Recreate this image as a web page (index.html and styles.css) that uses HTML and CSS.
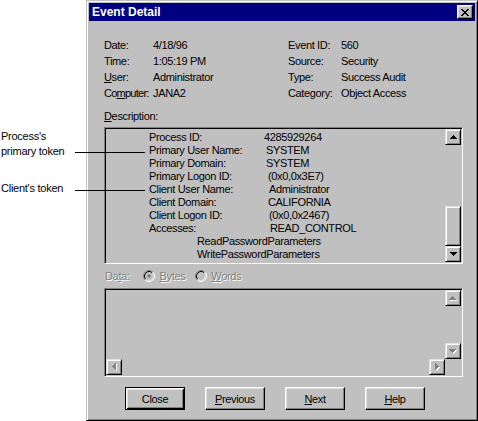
FILE: index.html
```html
<!DOCTYPE html>
<html>
<head>
<meta charset="utf-8">
<title>Event Detail</title>
<link rel="stylesheet" href="styles.css">
</head>
<body>
<div class="page">
  <div class="notes">
    <div class="note">Process's<br>primary token</div>
    <div class="note note-client">Client's token</div>
  </div>

  <div class="window">
    <div class="titlebar">
      <span class="title">Event Detail</span>
      <span class="xbtn">
        <svg width="8" height="7" viewBox="0 0 8 7" shape-rendering="crispEdges"><path d="M0 0h2v1H0zM6 0h2v1H6zM1 1h2v1H1zM5 1h2v1H5zM2 2h4v1H2zM3 3h2v1H3zM2 4h4v1H2zM1 5h2v1H1zM5 5h2v1H5zM0 6h2v1H0zM6 6h2v1H6z" fill="#000"/></svg>
      </span>
    </div>

    <div class="content">
      <div class="info">
        <span>Date:</span><span>4/18/96</span><span>Event ID:</span><span>560</span>
        <span>Time:</span><span>1:05:19 PM</span><span>Source:</span><span>Security</span>
        <span><u>U</u>ser:</span><span>Administrator</span><span>Type:</span><span>Success Audit</span>
        <span class="tight">Co<u>m</u>puter:</span><span>JANA2</span><span>Category:</span><span>Object Access</span>
      </div>

      <div class="desc-label"><u>D</u>escription:</div>

      <div class="sunken desc-box">
        <div class="desc-text">
          <span>Process ID:</span><span class="om2">4285929264</span>
          <span>Primary User Name:</span><span>SYSTEM</span>
          <span>Primary Domain:</span><span>SYSTEM</span>
          <span>Primary Logon ID:</span><span class="o2">(0x0,0x3E7)</span>
          <span>Client User Name:</span><span class="o3">Administrator</span>
          <span>Client Domain:</span><span class="o2">CALIFORNIA</span>
          <span>Client Logon ID:</span><span class="o3">(0x0,0x2467)</span>
          <span>Accesses:</span><span class="o4">READ_CONTROL</span>
          <span class="wide">ReadPasswordParameters</span>
          <span class="wide">WritePasswordParameters</span>
        </div>
        <div class="vscroll">
          <div class="raised sbtn">
            <svg width="7" height="4" viewBox="0 0 7 4" shape-rendering="crispEdges"><path d="M3 0h1v1h1v1h1v1h1v1H0V3h1V2h1V1h1z" fill="#000"/></svg>
          </div>
          <div class="track"><div class="raised thumb"></div></div>
          <div class="raised sbtn">
            <svg width="7" height="4" viewBox="0 0 7 4" shape-rendering="crispEdges"><path d="M0 0h7v1H6v1H5v1H4v1H3V3H2V2H1V1H0z" fill="#000"/></svg>
          </div>
        </div>
      </div>

      <div class="data-row disabled">
        <span class="data-label">Da<u>t</u>a:</span>
        <svg class="radio" width="12" height="12" viewBox="0 0 12 12">
          <circle cx="6" cy="6" r="4.2" fill="#c0c0c0"/>
          <path d="M2.11 9.89A5.5 5.5 0 0 1 9.89 2.11" stroke="#808080" fill="none"/>
          <path d="M9.89 2.11A5.5 5.5 0 0 1 2.11 9.89" stroke="#fff" fill="none"/>
          <path d="M2.82 9.18A4.5 4.5 0 0 1 9.18 2.82" stroke="#000" fill="none"/>
          <path d="M9.18 2.82A4.5 4.5 0 0 1 2.82 9.18" stroke="#dfdfdf" fill="none"/>
          <circle cx="6" cy="6" r="1.8" fill="#808080"/>
        </svg>
        <span class="opt-bytes"><u>B</u>ytes</span>
        <svg class="radio radio-2" width="12" height="12" viewBox="0 0 12 12">
          <circle cx="6" cy="6" r="4.2" fill="#c0c0c0"/>
          <path d="M2.11 9.89A5.5 5.5 0 0 1 9.89 2.11" stroke="#808080" fill="none"/>
          <path d="M9.89 2.11A5.5 5.5 0 0 1 2.11 9.89" stroke="#fff" fill="none"/>
          <path d="M2.82 9.18A4.5 4.5 0 0 1 9.18 2.82" stroke="#000" fill="none"/>
          <path d="M9.18 2.82A4.5 4.5 0 0 1 2.82 9.18" stroke="#dfdfdf" fill="none"/>
        </svg>
        <span class="opt-words"><u>W</u>ords</span>
      </div>

      <div class="sunken data-box">
        <div class="data-area"></div>
        <div class="vscroll">
          <div class="raised sbtn">
            <svg width="8" height="5" viewBox="0 0 8 5" shape-rendering="crispEdges"><path d="M4 1h1v1h1v1h1v1h1v1H1V4h1V3h1V2h1z" fill="#fff"/><path d="M3 0h1v1h1v1h1v1h1v1H0V3h1V2h1V1h1z" fill="#808080"/></svg>
          </div>
          <div class="track"></div>
          <div class="raised sbtn">
            <svg width="8" height="5" viewBox="0 0 8 5" shape-rendering="crispEdges"><path d="M1 1h7v1H7v1H6v1H5v1H4V4H3V3H2V2H1z" fill="#fff"/><path d="M0 0h7v1H6v1H5v1H4v1H3V3H2V2H1V1H0z" fill="#808080"/></svg>
          </div>
        </div>
        <div class="hscroll">
          <div class="raised sbtn">
            <svg width="5" height="8" viewBox="0 0 5 8" shape-rendering="crispEdges"><path d="M4 1h1v7H4V7H3V6H2V5H1V4h1V3h1V2h1z" fill="#fff"/><path d="M3 0h1v7H3V6H2V5H1V4H0V3h1V2h1V1h1z" fill="#808080"/></svg>
          </div>
          <div class="track"></div>
          <div class="raised sbtn">
            <svg width="5" height="8" viewBox="0 0 5 8" shape-rendering="crispEdges"><path d="M1 1h1v1h1v1h1v1h1v1H4v1H3v1H2v1H1z" fill="#fff"/><path d="M0 0h1v1h1v1h1v1h1v1H3v1H2v1H1v1H0z" fill="#808080"/></svg>
          </div>
        </div>
        <div class="corner"></div>
      </div>

      <div class="buttons">
        <button class="btn btn-default">Close</button>
        <button class="btn"><u>P</u>revious</button>
        <button class="btn"><u>N</u>ext</button>
        <button class="btn"><u>H</u>elp</button>
      </div>
    </div>
  </div>

  <div class="leader leader-primary"></div>
  <div class="leader leader-client"></div>
</div>
</body>
</html>
```

FILE: styles.css
```css
* {
  box-sizing: border-box;
}

html,
body {
  margin: 0;
  padding: 0;
  background: #fff;
}

body {
  font-family: "Liberation Sans", Arial, sans-serif;
  font-size: 11px;
  letter-spacing: -0.35px;
  color: #000;
}

u {
  text-decoration: underline;
  text-underline-offset: 1px;
}

.page {
  position: relative;
  display: flex;
  width: 478px;
  height: 421px;
}

/* annotations on the left */
.notes {
  width: 86px;
  flex: none;
  padding: 129px 0 0 1px;
  line-height: 15px;
  letter-spacing: -0.25px;
}

.note-client {
  margin-top: 22px;
}

.leader {
  position: absolute;
  left: 75px;
  width: 70px;
  height: 1px;
  background: #000;
  z-index: 2;
}

.leader-primary {
  top: 152px;
}

.leader-client {
  top: 190px;
}

/* window */
.window {
  width: 392px;
  height: 421px;
  flex: none;
  background: #c0c0c0;
  border: 1px solid;
  border-color: #c0c0c0 #000 #000 #c0c0c0;
  box-shadow: inset 1px 1px #fff, inset -1px -1px #808080;
  padding: 2px;
  display: flex;
  flex-direction: column;
}

.titlebar {
  height: 18px;
  background: #000080;
  display: flex;
  align-items: center;
  justify-content: space-between;
  padding: 0 2px 0 3px;
}

.title {
  color: #fff;
  font-weight: bold;
  font-size: 12px;
  letter-spacing: 0;
  line-height: 18px;
}

.xbtn {
  width: 16px;
  height: 14px;
  background: #c0c0c0;
  border: 1px solid;
  border-color: #fff #000 #000 #fff;
  box-shadow: inset -1px -1px #808080, inset 1px 1px #dfdfdf;
  display: flex;
  align-items: center;
  justify-content: center;
}

.xbtn svg {
  display: block;
}

.content {
  padding-left: 15px;
}

.info {
  margin-top: 16px;
  display: grid;
  grid-template-columns: 49px 135px 53px auto;
  line-height: 16px;
  white-space: nowrap;
}

.info .tight {
  letter-spacing: -0.75px;
}

.desc-label {
  margin-top: 7px;
  line-height: 16px;
}

/* sunken boxes */
.sunken {
  border: 1px solid;
  border-color: #808080 #fff #fff #808080;
  box-shadow: inset 1px 1px #000, inset -1px -1px #c0c0c0;
  padding: 1px;
}

.raised {
  background: #c0c0c0;
  border: 1px solid;
  border-color: #dfdfdf #000 #000 #dfdfdf;
  box-shadow: inset 1px 1px #fff, inset -1px -1px #808080;
}

.desc-box {
  margin-top: 3px;
  width: 359px;
  height: 137px;
  display: flex;
}

.desc-text {
  flex: 1;
  padding: 2px 0 0 43px;
  line-height: 13px;
  display: grid;
  grid-template-columns: 117px auto;
  align-content: start;
  white-space: nowrap;
}

.desc-text .wide {
  grid-column: 1 / -1;
  padding-left: 48px;
}

.o2 { padding-left: 2px; }
.o3 { padding-left: 3px; }
.o4 { padding-left: 4px; }
.om2 { margin-left: -2px; }

.vscroll {
  width: 16px;
  display: flex;
  flex-direction: column;
}

.track {
  flex: 1;
  display: flex;
  flex-direction: column;
  justify-content: flex-end;
}

.thumb {
  height: 40px;
}

.sbtn {
  width: 16px;
  height: 16px;
  flex: none;
  display: flex;
  align-items: center;
  justify-content: center;
}

.sbtn svg {
  display: block;
}

/* data row */
.data-row {
  margin-top: 4px;
  height: 16px;
  line-height: 16px;
  display: flex;
  align-items: center;
  padding-left: 1px;
}

.disabled {
  color: #808080;
  text-shadow: 1px 1px 0 #fff;
}

.radio {
  display: block;
  flex: none;
  margin-left: 13px;
}

.radio-2 {
  margin-left: 10px;
}

.opt-bytes,
.opt-words {
  margin-left: 5px;
}

.opt-words {
  margin-left: 4px;
}

.data-box {
  margin-top: 4px;
  width: 359px;
  height: 89px;
  display: grid;
  grid-template-columns: 1fr 16px;
  grid-template-rows: 1fr 16px;
}

.hscroll {
  display: flex;
}

.hscroll .track {
  flex: 1;
}

/* buttons */
.buttons {
  margin-top: 10px;
  padding-left: 21px;
  display: flex;
  gap: 20px;
}

.btn {
  width: 60px;
  height: 23px;
  padding: 0;
  font-family: inherit;
  font-size: 11px;
  letter-spacing: -0.35px;
  color: #000;
  background: #c0c0c0;
  border: 1px solid;
  border-color: #fff #000 #000 #fff;
  box-shadow: inset -1px -1px #808080, inset 1px 1px #dfdfdf;
  border-radius: 0;
}

.btn-default {
  border-color: #000;
  box-shadow: inset 1px 1px #fff, inset -1px -1px #000, inset 2px 2px #dfdfdf, inset -2px -2px #808080;
}
```
